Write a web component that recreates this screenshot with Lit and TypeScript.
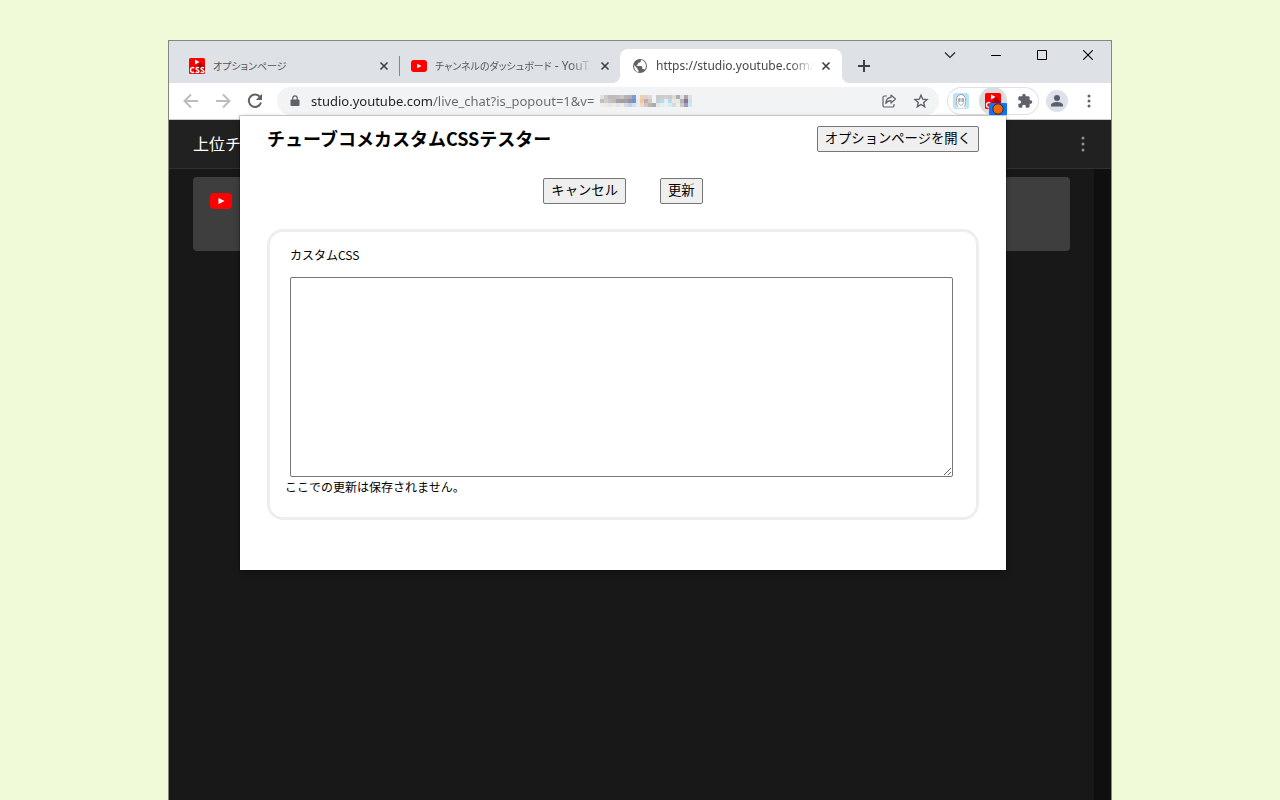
import { LitElement, html, css, svg } from "lit";
import { customElement } from "lit/decorators.js";

const MOSAIC = [
  ["#e2e2e2", "#c9cacb", "#b9bcc4", "#c3bcb4", "#c2bfba", "#c8c6c8", "#b9b4b1", "#b3aeb0", "#7f9fd0", "#eef0f2", "#efd0ac", "#e6d2c2", "#e0d8d4", "#f1f3f4", "#c9cacb", "#c9cfd0", "#d9cdc1", "#c4cbd6", "#e2dcd4", "#a7b0c0", "#e2e2e4", "#bba3a6", "#dce2e6"],
  ["#c0bfbf", "#d3cfc8", "#c6c0c8", "#c2b6b8", "#a7a0b4", "#a99b98", "#a79fa8", "#9a90a4", "#6f97cf", "#e6ecf2", "#eccba2", "#b7accb", "#dcc6b8", "#f1f3f4", "#c9cbcc", "#b6dcea", "#dff0f4", "#b9dcec", "#ece9e2", "#f2e6cf", "#b3b7bd", "#85789c", "#d2dfe9"],
  ["#eceef0", "#f0eade", "#e4e6ee", "#f2ecd9", "#dbe6ee", "#e9ebee", "#d3dbe4", "#c8d0df", "#d4e0ec", "#e9ebee", "#eed9bf", "#d8c5b5", "#b4b4b6", "#a9abae", "#e2e6e8", "#e0f0f2", "#e4f2f2", "#d9ebf2", "#c6e0ee", "#f1ede0", "#c8ccd2", "#a59cb0", "#d3e6ef"],
];

const crossIcon = svg`<path d="M4.500 4.500l7 7M11.500 4.500l-7 7" stroke="#3c4043" stroke-width="1.600" fill="none"/>`;

const youTube = (w: number, h: number) => html`<svg width=${w} height=${h} viewBox="0 0 22 16" preserveAspectRatio="none" aria-hidden="true">
  <rect width="22" height="16" rx="4" fill="#f00"/><path d="M8.500 5v6l6-3z" fill="#fff"/></svg>`;

const cssBadge = html`<svg width="16" height="16" viewBox="0 0 16 16" aria-hidden="true">
  <rect width="16" height="16" rx="1.500" fill="#f00"/>
  <path d="M11 4l5 5v5H4z" fill="#b00000"/>
  <path d="M6 1.500v5L10.500 4z" fill="#fff"/>
  <g fill="none" stroke="#fff" stroke-width="1.400"><path d="M5 10.300C4 9 1.500 9.300 1.500 12S4 15 5 13.700"/><path d="M10 9.900C8.500 9 7 9.600 7 10.700S10 12 10 13.300 8 15 6.700 13.900"/><path d="M15 9.900C13.500 9 12 9.600 12 10.700S15 12 15 13.300 13 15 11.700 13.900"/></g></svg>`;

@customElement("app-root")
export class AppRoot extends LitElement {
  static styles = css`
    :host {
      display: block;
      box-sizing: border-box;
      height: 100vh;
      padding: 40px 168px 0;
      overflow: hidden;
      background: #f0fad9;
      font-family: "Noto Sans", "Noto Sans CJK JP", sans-serif;
      font-size: 12px;
      color: #000;
    }
    * { box-sizing: border-box; }
    svg { display: block; flex: none; }
    h1, p { margin: 0; }
    .window {
      position: relative;
      display: flex;
      flex-direction: column;
      height: 100%;
      border: 1px solid #7f8a80;
      border-bottom: 0;
      background: #181818;
    }
    .icon-button {
      display: flex;
      align-items: center;
      justify-content: center;
      flex: none;
      padding: 0;
      border: 0;
      background: none;
      color: #5f6368;
    }
    .tabs {
      display: flex;
      align-items: flex-end;
      flex: none;
      height: 42px;
      padding-left: 8px;
      background: #dee1e6;
    }
    .tab {
      display: flex;
      align-items: center;
      width: 222px;
      height: 34px;
      padding: 0 7px 0 12px;
      color: #54575b;
    }
    .tab.divided {
      width: 221px;
      background: linear-gradient(#80868b, #80868b) 0 7px / 1px 20px no-repeat;
    }
    .tab.active {
      position: relative;
      padding-right: 8px;
      background: #fff;
      border-radius: 8px 8px 0 0;
      color: #45484c;
    }
    .tab.active::before, .tab.active::after {
      content: "";
      position: absolute;
      bottom: 0;
      width: 8px;
      height: 8px;
    }
    .tab.active::before { left: -8px; background: radial-gradient(circle at 0 0, transparent 8px, #fff 8px); }
    .tab.active::after { right: -8px; background: radial-gradient(circle at 100% 0, transparent 8px, #fff 8px); }
    .tab-title {
      flex: 1;
      min-width: 0;
      margin: 0 4px 0 8px;
      overflow: hidden;
      white-space: nowrap;
      line-height: 18px;
    }
    .tab-title.fade { mask-image: linear-gradient(90deg, #000 calc(100% - 24px), transparent); }
    .kana { font-size: 10px; font-feature-settings: "palt"; }
    .tab-close { width: 16px; height: 16px; }
    .new-tab { width: 28px; height: 34px; margin-left: 8px; }
    .captions { display: flex; align-self: flex-start; margin-left: auto; }
    .caption { width: 46px; height: 28px; }
    .toolbar {
      display: flex;
      align-items: flex-start;
      flex: none;
      height: 37px;
      padding: 4px 6px 0;
      background: #fff;
      border-bottom: 1px solid #c8cacc;
    }
    .tool { width: 32px; height: 28px; }
    .omnibox {
      display: flex;
      align-items: center;
      flex: 1;
      height: 28px;
      margin: 0 8px 0 6px;
      padding: 0 2px 0 10px;
      border-radius: 14px;
      background: #f1f3f4;
    }
    .url {
      width: 289px;
      height: 28px;
      margin-left: 8px;
      padding: 0;
      border: 0;
      outline: 0;
      font-family: "Noto Sans", sans-serif;
      font-size: 13px;
      color: transparent;
      background: linear-gradient(90deg, #202124 122px, #666a6e 122px);
      background-clip: text;
      -webkit-background-clip: text;
    }
    .spacer { flex: 1; }
    .extensions {
      display: flex;
      gap: 4px;
      margin-right: 2px;
      border-radius: 14px;
      box-shadow: inset 0 0 0 1px #dfe1e5;
    }
    .extension { width: 28px; height: 28px; border-radius: 14px; }
    .extension.pressed { background: #dcdcdc; }
    .chat { flex: 1; display: flex; flex-direction: column; }
    .chat-header {
      display: flex;
      align-items: center;
      justify-content: space-between;
      height: 49px;
      padding: 0 12px 0 24px;
      background: #212121;
      border-bottom: 1px solid #303030;
      color: #fff;
      font-size: 16px;
    }
    .chat-title { padding-bottom: 2px; }
    .chat-body { flex: 1; padding: 8px 24px; border-right: 17px solid #0f0f0f; }
    .notice {
      height: 74px;
      padding: 16px 17px;
      border-radius: 4px;
      background: #3e3e3e;
    }
    .popup {
      position: absolute;
      top: 75px;
      right: 105px;
      width: 766px;
      padding: 10px 27px 50px;
      background: #fff;
      box-shadow: 0 0 0 1px rgba(0, 0, 0, 0.18), 0 2px 6px rgba(0, 0, 0, 0.3);
      font-family: "Noto Sans CJK JP", sans-serif;
    }
    .popup-head { display: flex; align-items: flex-start; justify-content: space-between; }
    .title { font-size: 18px; line-height: 24px; font-weight: 700; }
    .action {
      height: 26px;
      padding: 0 7px 2px;
      border: 1px solid #767676;
      border-radius: 2px;
      background: #efefef;
      color: #000;
      font-family: "Noto Sans CJK JP", sans-serif;
      line-height: 22px;
    }
    .actions { display: flex; justify-content: center; gap: 34px; margin: 26px 0 25px; }
    .panel { padding: 15px 15px 22px; border: 3px solid #eee; border-radius: 16px; }
    .label { display: block; margin: 0 5px 14px; line-height: 16px; }
    .editor {
      display: block;
      width: calc(100% - 13px);
      height: 200px;
      margin: 0 5px 2px;
      border: 1px solid #767676;
      border-radius: 2px;
      background: #fff;
      outline: 0;
    }
    .note { line-height: 16px; }
  `;

  private closeButton() {
    return html`<button class="icon-button tab-close" aria-label="閉じる"><svg width="16" height="16" viewBox="0 0 16 16">${crossIcon}</svg></button>`;
  }

  private renderTabs() {
    return html`<div class="tabs">
      <div class="tab">${cssBadge}<span class="tab-title"><span class="kana">オプションページ</span></span>${this.closeButton()}</div>
      <div class="tab divided">${youTube(16, 12)}<span class="tab-title fade"><span class="kana">チャンネルのダッシュボード</span> - YouT</span>${this.closeButton()}</div>
      <div class="tab active">
        <svg width="16" height="16" viewBox="0 0 16 16"><circle cx="8" cy="8" r="7" fill="#5f6368"/><path d="M2 7l3.500 3.500v1l1 1v1.800C3.500 13.500 2 11 2 7zM9 1.800v1.400L7.500 4.700H6v1.500L4.800 7v1h4.500l1 1v2h1.500l1 .8C15 9 14 4.500 10.800 2.600z" fill="#fff"/></svg>
        <span class="tab-title fade">https://studio.youtube.com/li</span>${this.closeButton()}
      </div>
      <button class="icon-button new-tab" aria-label="新しいタブ"><svg width="14" height="14" viewBox="0 0 14 14"><path d="M7 1v12M1 7h12" stroke="#3c4043" stroke-width="2"/></svg></button>
      <div class="captions">
        <button class="icon-button caption" aria-label="タブを検索"><svg width="12" height="12" viewBox="0 0 12 12"><path d="M1 3.500l5 5 5-5" fill="none" stroke="#222" stroke-width="1.100"/></svg></button>
        <button class="icon-button caption" aria-label="最小化"><svg width="10" height="10" viewBox="0 0 10 10"><path d="M0 5.500h10" stroke="#000"/></svg></button>
        <button class="icon-button caption" aria-label="最大化"><svg width="10" height="10" viewBox="0 0 10 10"><path d="M.5.5h9v9h-9z" fill="none" stroke="#000"/></svg></button>
        <button class="icon-button caption" aria-label="閉じる"><svg width="10" height="10" viewBox="0 0 10 10"><path d="M0 0l10 10M10 0L0 10" stroke="#000" stroke-width="1.100"/></svg></button>
      </div>
    </div>`;
  }

  private renderToolbar() {
    return html`<div class="toolbar">
      <button class="icon-button tool" aria-label="戻る"><svg width="16" height="16" viewBox="0 0 16 16"><path d="M15 8H2M8 1.500L1.500 8 8 14.500" fill="none" stroke="#babcbe" stroke-width="1.900"/></svg></button>
      <button class="icon-button tool" aria-label="進む"><svg width="16" height="16" viewBox="0 0 16 16"><path d="M1 8h13M8 1.500L14.500 8 8 14.500" fill="none" stroke="#babcbe" stroke-width="1.900"/></svg></button>
      <button class="icon-button tool" aria-label="再読み込み"><svg width="16" height="16" viewBox="0 0 16 16"><path d="M13.200 4.200A6.200 6.200 0 1 0 14 9.500" fill="none" stroke="#5f6368" stroke-width="2"/><path d="M15 .8V7H8.800z" fill="#5f6368"/></svg></button>
      <div class="omnibox">
        <svg width="16" height="16" viewBox="0 0 16 16"><path d="M4.500 6.500h7a1 1 0 0 1 1 1V12a1 1 0 0 1-1 1h-7a1 1 0 0 1-1-1V7.500a1 1 0 0 1 1-1z" fill="#5f6368"/><path d="M5.800 7V5a2.200 2.200 0 0 1 4.400 0v2" fill="none" stroke="#5f6368" stroke-width="1.200"/></svg>
        <input class="url" aria-label="アドレス" value="studio.youtube.com/live_chat?is_popout=1&v=" />
        <svg width="92" height="12" viewBox="0 0 92 12" shape-rendering="crispEdges" aria-hidden="true">
          ${MOSAIC.map((row, y) => row.map((fill, x) => svg`<rect x=${x * 4} y=${y * 4} width="4" height="4" fill=${fill}/>`))}
        </svg>
        <span class="spacer"></span>
        <button class="icon-button tool" aria-label="共有"><svg width="16" height="16" viewBox="0 0 16 16" fill="none" stroke="#5f6368" stroke-width="1.200" stroke-linejoin="round"><path d="M6 3H3.500A1.500 1.500 0 0 0 2 4.500v8A1.500 1.500 0 0 0 3.500 14h8a1.500 1.500 0 0 0 1.500-1.500V11"/><path d="M10 2l4.500 4L10 10V7.700C7.500 7.700 6 8.500 4.800 10.500 5 7 7 4.500 10 4.300z"/></svg></button>
        <button class="icon-button tool" aria-label="ブックマーク"><svg width="16" height="16" viewBox="0 0 16 16"><path d="M8 2.200l1.700 4 4.300.4-3.300 2.900 1 4.200L8 11.500l-3.700 2.200 1-4.200L2 6.600l4.300-.4z" fill="none" stroke="#5f6368" stroke-width="1.400"/></svg></button>
      </div>
      <div class="extensions">
        <button class="icon-button extension" aria-label="拡張機能 1"><svg width="16" height="16" viewBox="0 0 16 16"><rect width="16" height="16" rx="3" fill="#b8e4f8"/><path d="M2.500 13.500C4 11 2.500 9 3 6c.5-3 2.500-4.500 5-4.500S12.500 3 13 6c.5 3-1 5 .5 7.500L11 15H5z" fill="#fff"/><path d="M4.500 14C3 11 4 9 3.500 7 3.500 3.500 5.500 1.500 8 1.500S12.500 3.500 12.500 7c-.5 2 .5 4-1 7" fill="none" stroke="#888" stroke-width=".8"/><path d="M5.500 6v3.500Q6 12 8 12.500q2-.5 2.500-3V6" fill="none" stroke="#999" stroke-width=".7"/><path d="M5.500 6h2M8.500 6h2M6 8h1.500M8.500 8H10" stroke="#555"/></svg></button>
        <button class="icon-button extension pressed" aria-label="カスタムCSS">
          <svg width="28" height="28" viewBox="0 0 28 28">
            <g transform="translate(6 6)"><rect width="16" height="16" rx="1.500" fill="#f00"/><path d="M11 4l5 5v5H4z" fill="#b00000"/><path d="M6 1.500v5L10.500 4z" fill="#fff"/><path d="M5 10.300C4 9 1.500 9.300 1.500 12S4 15 5 13.700" fill="none" stroke="#fff" stroke-width="1.400"/></g>
            <rect x="10" y="16" width="18" height="12" rx="1" fill="#0b74ff"/><circle cx="19" cy="22" r="5.200" fill="#f7630c" stroke="#3a2a1c"/>
          </svg>
        </button>
        <button class="icon-button extension" aria-label="拡張機能"><svg width="16" height="16" viewBox="0 0 24 24"><path fill="#5f6368" d="M20.500 11H19V7c0-1.100-.9-2-2-2h-4V3.500a2.500 2.500 0 0 0-5 0V5H4c-1.100 0-2 .9-2 2v3.800h1.500a2.700 2.700 0 0 1 0 5.400H2V20c0 1.100.9 2 2 2h3.800v-1.500a2.700 2.700 0 0 1 5.400 0V22H17c1.100 0 2-.9 2-2v-4h1.500a2.500 2.500 0 0 0 0-5z"/></svg></button>
      </div>
      <button class="icon-button tool" aria-label="プロフィール"><svg width="22" height="22" viewBox="0 0 22 22"><circle cx="11" cy="11" r="11" fill="#dee1e9"/><circle cx="11" cy="8" r="3" fill="#56606f"/><path d="M5 16.500v-1.500c0-2 3.500-3 6-3s6 1 6 3v1.500z" fill="#56606f"/></svg></button>
      <button class="icon-button tool" aria-label="メニュー"><svg width="4" height="14" viewBox="0 0 4 14"><g fill="#5f6368"><circle cx="2" cy="2" r="1.500"/><circle cx="2" cy="7" r="1.500"/><circle cx="2" cy="12" r="1.500"/></g></svg></button>
    </div>`;
  }

  render() {
    return html`<div class="window">
      ${this.renderTabs()} ${this.renderToolbar()}
      <main class="chat">
        <div class="chat-header">
          <span class="chat-title">上位チ</span>
          <button class="icon-button tool" aria-label="その他"><svg width="4" height="16" viewBox="0 0 4 16"><g fill="#909090"><circle cx="2" cy="2" r="1.500"/><circle cx="2" cy="8" r="1.500"/><circle cx="2" cy="14" r="1.500"/></g></svg></button>
        </div>
        <div class="chat-body"><div class="notice">${youTube(22, 16)}</div></div>
      </main>
      <section class="popup">
        <div class="popup-head">
          <h1 class="title">チューブコメカスタムCSSテスター</h1>
          <button class="action">オプションページを開く</button>
        </div>
        <div class="actions">
          <button class="action">キャンセル</button>
          <button class="action">更新</button>
        </div>
        <div class="panel">
          <label class="label" for="custom-css">カスタムCSS</label>
          <textarea class="editor" id="custom-css"></textarea>
          <p class="note">ここでの更新は保存されません。</p>
        </div>
      </section>
    </div>`;
  }
}
